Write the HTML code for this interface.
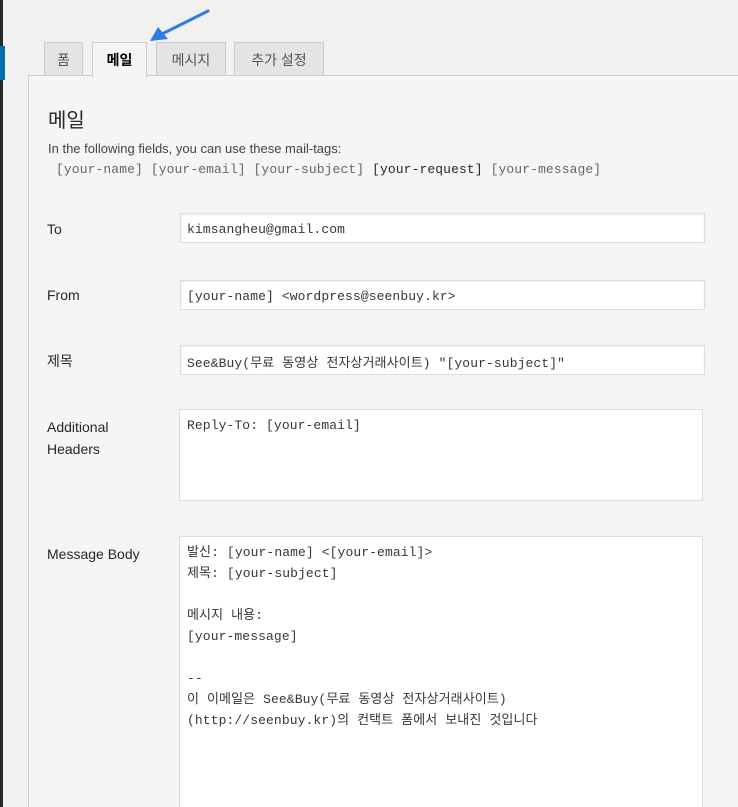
<!DOCTYPE html>
<html style="height:807px;overflow:hidden"><head><meta charset="utf-8"><style>
body{margin:0;width:738px;height:807px;overflow:hidden;background:#f1f1f1;font-family:"Liberation Sans","Noto Sans CJK KR",sans-serif;position:relative}
.side{position:absolute;left:0;top:0;width:3px;height:807px;background:#23282d}
.blue{position:absolute;left:0;top:46px;width:5px;height:34px;background:#0073aa}
.tab{position:absolute;top:42px;height:33px;border:1px solid #ccc;border-bottom:none;background:#e4e4e4;color:#555;font-size:14px;line-height:34px;text-align:center;box-sizing:border-box}
.tab.act{background:#f5f5f5;color:#000;font-weight:bold;height:35px;z-index:2}
.panel{position:absolute;left:28px;top:75px;width:720px;height:732px;border:1px solid #ccc;border-bottom:none;background:#f5f5f5}
.mono{font-family:"Liberation Mono","Noto Sans CJK KR",monospace;letter-spacing:0.1px}
.lbl{position:absolute;left:47px;font-size:14px;color:#23282d;line-height:22px}
.inp{position:absolute;left:180px;width:525px;height:30px;border:1px solid #ddd;background:#fff;box-sizing:border-box;font-size:13px;color:#32373c;padding:8px 6px 0;box-shadow:inset 0 1px 2px rgba(0,0,0,.07)}
.ta{position:absolute;left:179px;width:524px;border:1px solid #ddd;background:#fff;box-sizing:border-box;font-size:13px;color:#32373c;padding:5px 7px;line-height:21px;white-space:pre;overflow:hidden}
</style></head><body>
<div class="side"></div><div class="blue"></div>
<div class="panel"></div>
<div class="tab" style="left:44px;width:39px">폼</div>
<div class="tab act" style="left:92px;width:55px">메일</div>
<div class="tab" style="left:156px;width:70px">메시지</div>
<div class="tab" style="left:234px;width:90px">추가 설정</div>
<svg style="position:absolute;left:140px;top:5px" width="75" height="42"><path d="M68 6 L20 30" stroke="#2e7be6" stroke-width="3" stroke-linecap="round"/><path d="M10 36 L18 22 L28 34 Z" fill="#2e7be6"/></svg>
<div style="position:absolute;left:48px;top:104px;font-size:20px;color:#23282d">메일</div>
<div style="position:absolute;left:48px;top:141px;font-size:13px;color:#444">In the following fields, you can use these mail-tags:</div>
<div class="mono" style="position:absolute;left:56px;top:162px;font-size:13px;color:#666;white-space:pre">[your-name] [your-email] [your-subject] <span style="color:#23282d">[your-request]</span> [your-message]</div>
<div class="lbl" style="top:218px">To</div>
<div class="inp mono" style="top:213px">kimsangheu@gmail.com</div>
<div class="lbl" style="top:284px">From</div>
<div class="inp mono" style="top:280px">[your-name] &lt;wordpress@seenbuy.kr&gt;</div>
<div class="lbl" style="top:350px">제목</div>
<div class="inp mono" style="top:345px;padding-top:6px">See&amp;Buy(무료 동영상 전자상거래사이트) "[your-subject]"</div>
<div class="lbl" style="top:416px">Additional<br>Headers</div>
<div class="ta mono" style="top:409px;height:92px">Reply-To: [your-email]</div>
<div class="lbl" style="top:543px">Message Body</div>
<div class="ta mono" style="top:536px;height:271px;border-bottom:none">발신: [your-name] &lt;[your-email]&gt;
제목: [your-subject]

메시지 내용:
[your-message]

--
이 이메일은 See&amp;Buy(무료 동영상 전자상거래사이트)
(http://seenbuy.kr)의 컨택트 폼에서 보내진 것입니다</div>
</body></html>
